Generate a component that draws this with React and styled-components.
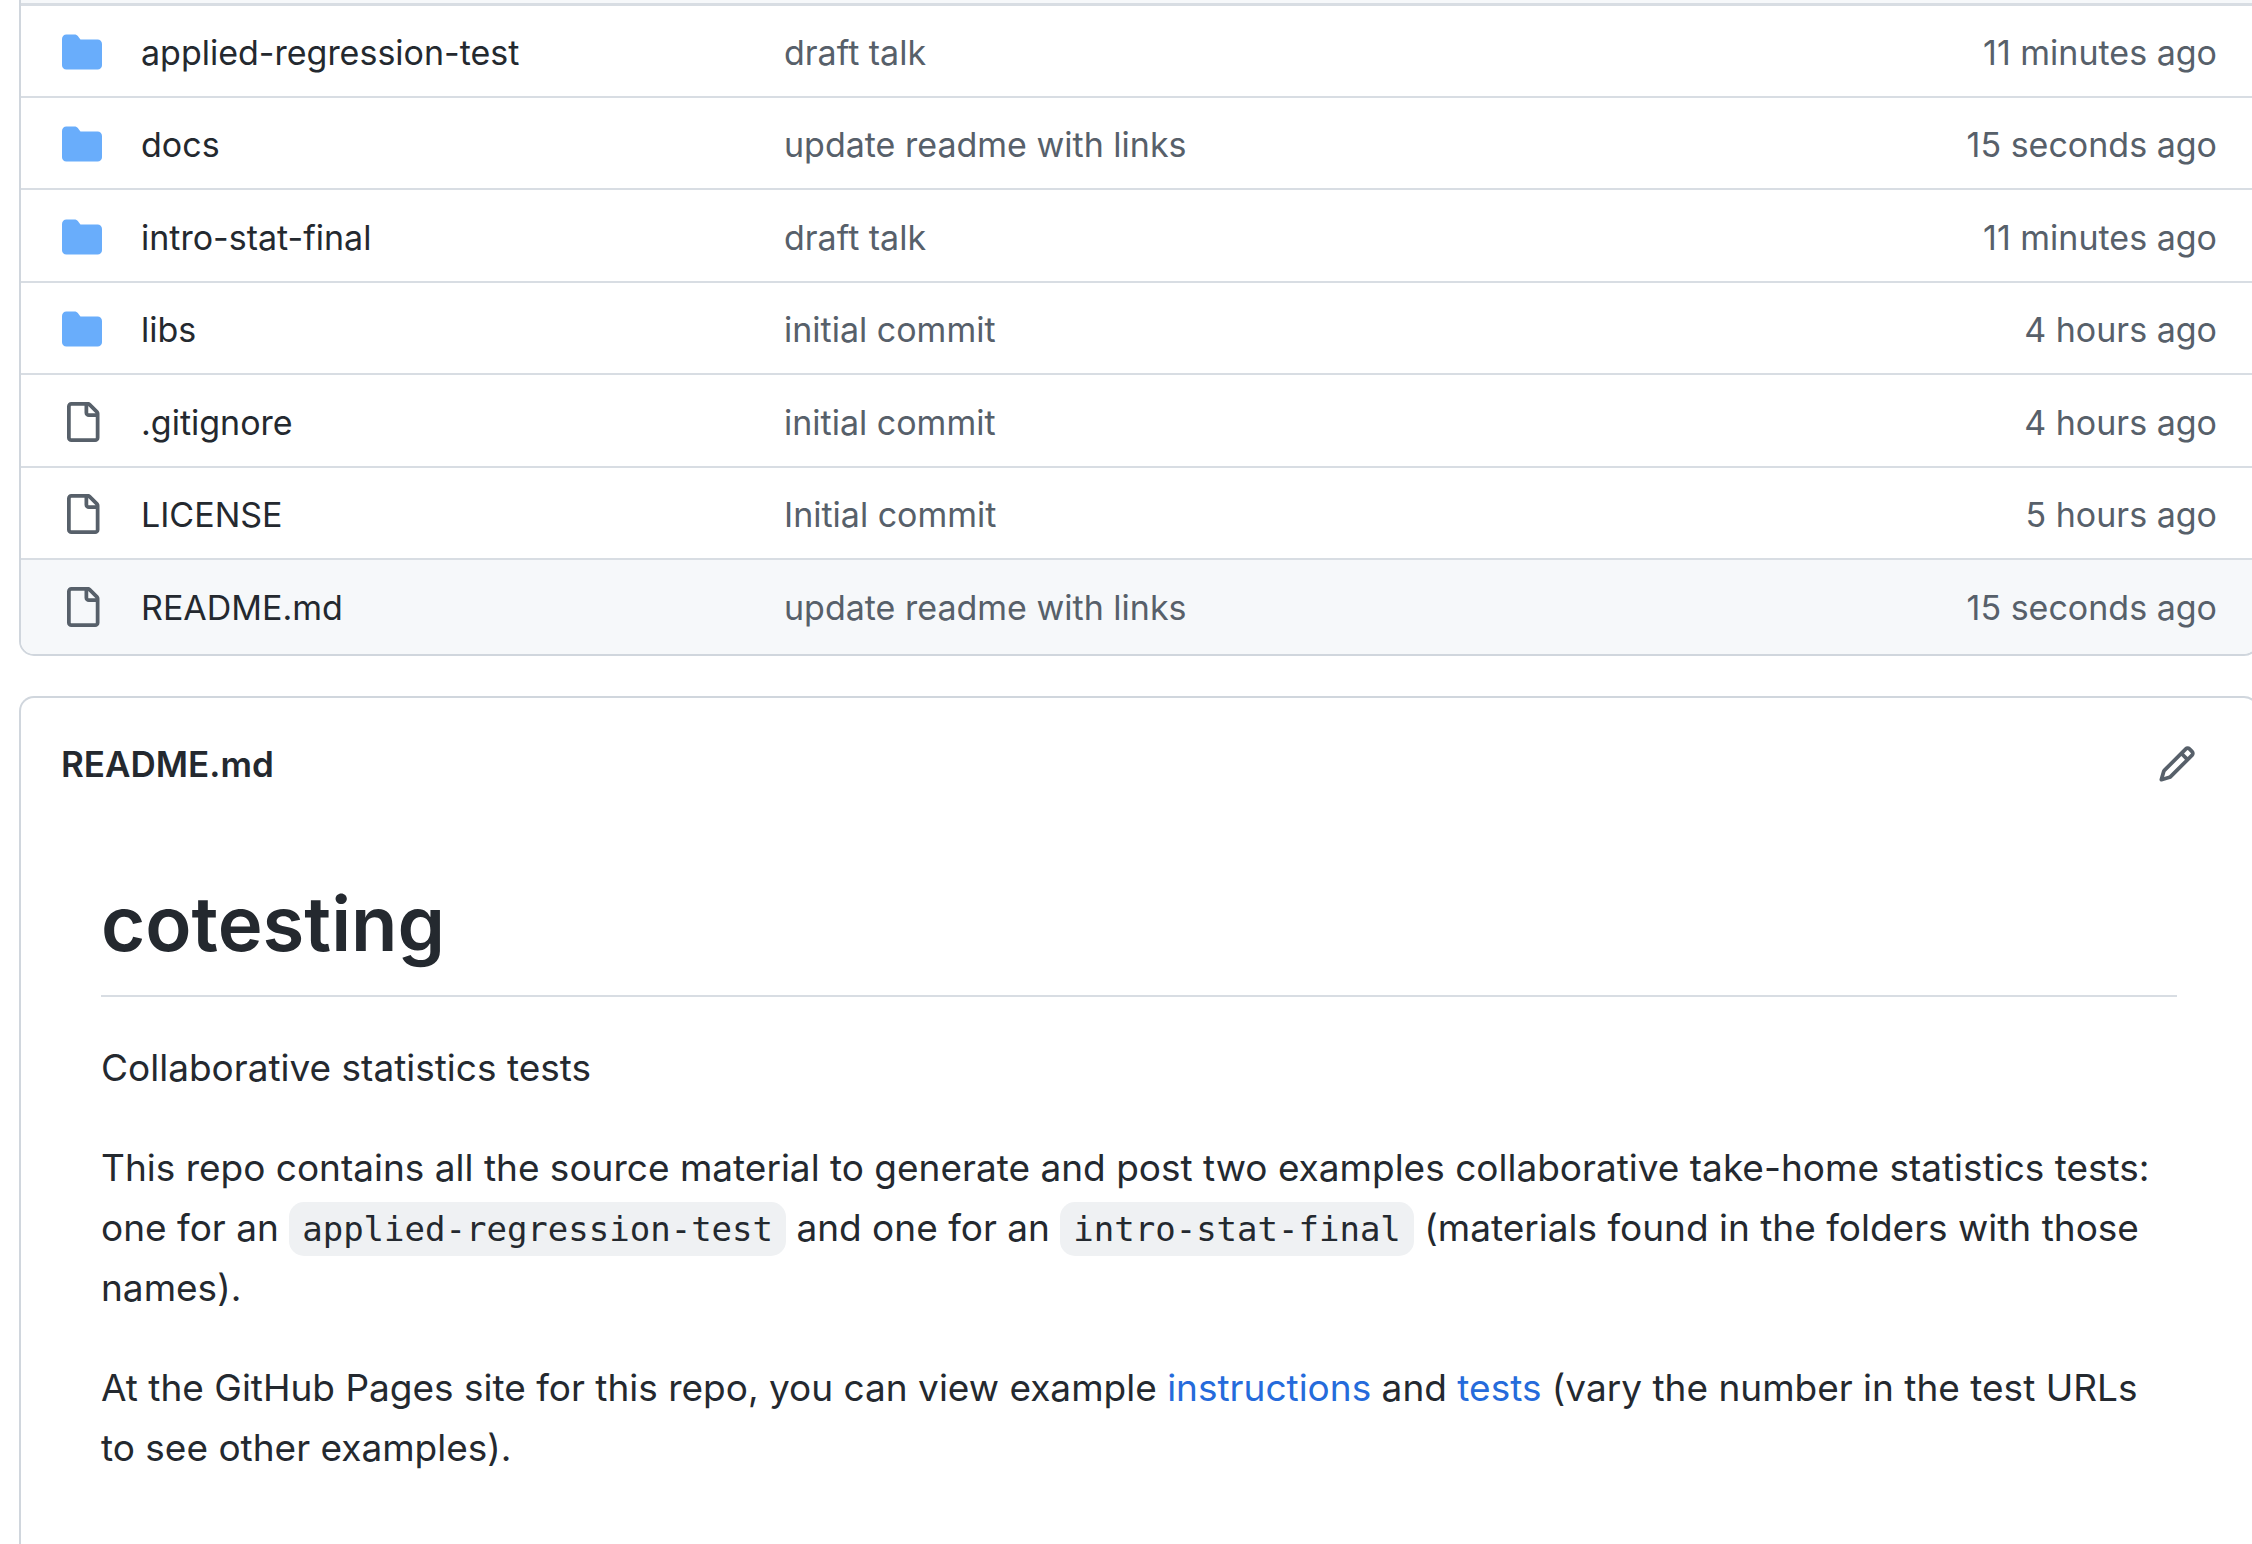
import React from "react";
import styled, { createGlobalStyle } from "styled-components";

const color = {
  text: "#24292f",
  muted: "#57606a",
  link: "#256bdb",
  folder: "#69adfb",
  border: "#d0d6dd",
  rowBorder: "#d8dde3",
  subtle: "#f6f8fa",
  code: "#eff1f3",
};

const GlobalStyle = createGlobalStyle`
  *, *::before, *::after { box-sizing: border-box; }
  body {
    margin: 0;
    overflow-x: hidden;
    background: #ffffff;
    color: ${color.text};
    font-family: Inter, "Liberation Sans", sans-serif;
  }
`;

const Page = styled.main`
  display: flex;
  flex-direction: column;
  gap: 40px;
  min-height: 100vh;
  margin-left: 19px;
  margin-right: -7px;
`;

const FileBox = styled.section`
  border: 2px solid ${color.border};
  border-top: 0;
  border-radius: 0 0 15px 15px;
  overflow: hidden;
`;

const CommitStrip = styled.div`
  height: 6px;
  background: ${color.subtle};
  border-bottom: 3px solid ${color.rowBorder};
`;

const Files = styled.table`
  width: 100%;
  table-layout: fixed;
  border-collapse: separate;
  border-spacing: 0;
  font-size: 34px;
  line-height: 54px;
`;

const IconColumn = styled.col`
  width: 120px;
`;

const NameColumn = styled.col`
  width: 643px;
`;

const AgeColumn = styled.col`
  width: 400px;
`;

const FileRow = styled.tr`
  background: ${(p) => (p.$active ? color.subtle : "#ffffff")};

  & > * {
    padding: 20px 0 16px;
    border-top: 2px solid ${color.rowBorder};
    font-weight: 400;
    text-align: left;
    vertical-align: top;
    white-space: nowrap;
  }
  &:first-child > * {
    border-top: 0;
  }
  &:nth-child(2n + 3) > * {
    padding-top: 21px;
  }
  &:last-child > * {
    padding-bottom: 19px;
  }
`;

const IconCell = styled.td`
  && {
    padding-left: 41px;
  }
  color: ${(p) => (p.$folder ? color.folder : color.muted)};
`;

const MessageCell = styled.td`
  color: ${color.muted};
`;

const AgeCell = styled.td`
  && {
    padding-right: 40px;
    text-align: right;
  }
  color: ${color.muted};
`;

const PlainLink = styled.a`
  color: inherit;
  text-decoration: none;
`;

const Icon = styled.svg`
  display: block;
  width: 40px;
  height: 40px;
  fill: currentColor;
`;

const IconSlot = styled.span`
  display: flex;
  align-items: center;
  height: 52px;
`;

const ReadmeBox = styled.section`
  flex: 1;
  border: 2px solid ${color.border};
  border-bottom: 0;
  border-radius: 15px 15px 0 0;
`;

const ReadmeHeader = styled.header`
  display: flex;
  align-items: center;
  justify-content: space-between;
  padding: 40px 40px 0;
`;

const ReadmeTitle = styled.h2`
  margin: 0;
  font-size: 35px;
  line-height: 52px;
  font-weight: 600;
`;

const EditButton = styled.button`
  padding: 0 20px;
  border: 0;
  background: none;
  color: ${color.muted};
  cursor: pointer;
`;

const Article = styled.article`
  padding: 83px 80px 80px;
  font-size: 37px;
  line-height: 60px;
`;

const Heading = styled.h1`
  margin: 0 0 41px;
  padding-bottom: 22px;
  border-bottom: 2px solid ${color.rowBorder};
  font-size: 76px;
  line-height: 100px;
  font-weight: 600;
`;

const Paragraph = styled.p`
  margin: 0 0 40px;
`;

const Code = styled.code`
  padding: 7px 13px;
  border-radius: 15px;
  background: ${color.code};
  font-family: "DejaVu Sans Mono", monospace;
  font-size: 34px;
  line-height: 40px;
`;

const TextLink = styled.a`
  color: ${color.link};
  text-decoration: none;
`;

const paths = {
  folder:
    "M1.75 1A1.75 1.75 0 0 0 0 2.75v10.5C0 14.216.784 15 1.75 15h12.5A1.75 1.75 0 0 0 16 13.25v-8.5A1.75 1.75 0 0 0 14.25 3H7.5a.25.25 0 0 1-.2-.1l-.9-1.2C6.07 1.26 5.55 1 5 1H1.75Z",
  file: "M2 1.75C2 .784 2.784 0 3.75 0h6.586c.464 0 .909.184 1.237.513l2.914 2.914c.329.328.513.773.513 1.237v9.586A1.75 1.75 0 0 1 13.25 16h-9.5A1.75 1.75 0 0 1 2 14.25Zm1.75-.25a.25.25 0 0 0-.25.25v12.5c0 .138.112.25.25.25h9.5a.25.25 0 0 0 .25-.25V6h-2.75A1.75 1.75 0 0 1 9 4.25V1.5Zm6.75.062V4.25c0 .138.112.25.25.25h2.688l-.011-.013-2.914-2.914-.013-.011Z",
  pencil:
    "M11.013 1.427a1.75 1.75 0 0 1 2.474 0l1.086 1.086a1.75 1.75 0 0 1 0 2.474l-8.61 8.61c-.21.21-.47.364-.756.445l-3.251.93a.75.75 0 0 1-.927-.928l.929-3.25c.081-.286.235-.547.445-.758l8.61-8.61Zm.176 4.823L9.75 4.81l-6.286 6.287a.253.253 0 0 0-.064.108l-.558 1.953 1.953-.558a.253.253 0 0 0 .108-.064Zm1.238-3.763a.25.25 0 0 0-.354 0L10.811 3.75l1.439 1.44 1.263-1.263a.25.25 0 0 0 0-.354Z",
};

const Octicon = ({ name }) => (
  <Icon viewBox="0 0 16 16" aria-hidden="true">
    <path d={paths[name]} />
  </Icon>
);

const files = [
  { type: "folder", name: "applied-regression-test", message: "draft talk", age: "11 minutes ago" },
  { type: "folder", name: "docs", message: "update readme with links", age: "15 seconds ago" },
  { type: "folder", name: "intro-stat-final", message: "draft talk", age: "11 minutes ago" },
  { type: "folder", name: "libs", message: "initial commit", age: "4 hours ago" },
  { type: "file", name: ".gitignore", message: "initial commit", age: "4 hours ago" },
  { type: "file", name: "LICENSE", message: "Initial commit", age: "5 hours ago" },
  { type: "file", name: "README.md", message: "update readme with links", age: "15 seconds ago", active: true },
];

export default function App() {
  return (
    <>
      <GlobalStyle />
      <Page>
        <FileBox>
          <CommitStrip />
          <Files>
            <colgroup>
              <IconColumn />
              <NameColumn />
              <col />
              <AgeColumn />
            </colgroup>
            <tbody>
              {files.map((f) => (
                <FileRow key={f.name} $active={f.active}>
                  <IconCell $folder={f.type === "folder"}>
                    <IconSlot>
                      <Octicon name={f.type} />
                    </IconSlot>
                  </IconCell>
                  <th scope="row">
                    <PlainLink href="#">{f.name}</PlainLink>
                  </th>
                  <MessageCell>
                    <PlainLink href="#">{f.message}</PlainLink>
                  </MessageCell>
                  <AgeCell>{f.age}</AgeCell>
                </FileRow>
              ))}
            </tbody>
          </Files>
        </FileBox>

        <ReadmeBox>
          <ReadmeHeader>
            <ReadmeTitle>README.md</ReadmeTitle>
            <EditButton type="button" aria-label="Edit">
              <Octicon name="pencil" />
            </EditButton>
          </ReadmeHeader>
          <Article>
            <Heading>cotesting</Heading>
            <Paragraph>Collaborative statistics tests</Paragraph>
            <Paragraph>
              This repo contains all the source material to generate and post two examples collaborative take-home
              statistics tests: one for an <Code>applied-regression-test</Code> and one for an{" "}
              <Code>intro-stat-final</Code> (materials found in the folders with those names).
            </Paragraph>
            <Paragraph>
              At the GitHub Pages site for this repo, you can view example{" "}
              <TextLink href="#">instructions</TextLink> and <TextLink href="#">tests</TextLink> (vary the number in
              the test URLs to see other examples).
            </Paragraph>
          </Article>
        </ReadmeBox>
      </Page>
    </>
  );
}
